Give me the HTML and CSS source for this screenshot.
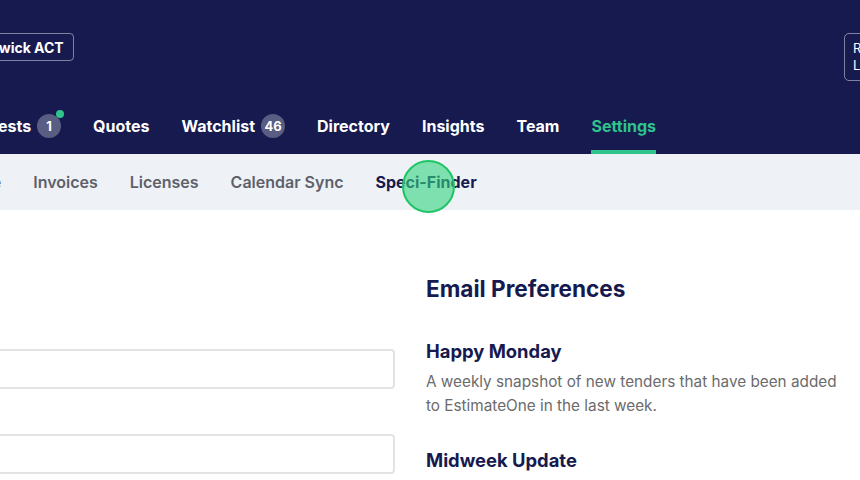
FILE: index.html
```html
<!DOCTYPE html>
<html lang="en">
<head>
  <meta charset="UTF-8">
  <meta name="viewport" content="width=device-width, initial-scale=1.0">
  <title>Settings - Speci-Finder</title>
  <link rel="stylesheet" href="styles.css">
</head>
<body>

  <header class="app-header">
    <div class="top-bar">
      <button class="location-btn">Fyshwick ACT</button>
      <div class="account-box">
        <span>Rebecca</span>
        <span>Lane</span>
      </div>
    </div>

    <nav class="main-nav">
      <a class="nav-item">Requests <span class="badge">1<span class="badge-dot"></span></span></a>
      <a class="nav-item">Quotes</a>
      <a class="nav-item">Watchlist <span class="badge">46</span></a>
      <a class="nav-item">Directory</a>
      <a class="nav-item">Insights</a>
      <a class="nav-item">Team</a>
      <a class="nav-item active">Settings</a>
    </nav>
  </header>

  <nav class="sub-nav">
    <a class="sub-item">Profile</a>
    <a class="sub-item">Invoices</a>
    <a class="sub-item">Licenses</a>
    <a class="sub-item">Calendar Sync</a>
    <a class="sub-item active">Speci-Finder</a>
    <span class="click-marker"></span>
  </nav>

  <main class="content">
    <section class="details">
      <div class="field">
        <label>First name</label>
        <input type="text">
      </div>
      <div class="field">
        <label>Last name</label>
        <input type="text">
      </div>
    </section>

    <section class="prefs">
      <h2>Email Preferences</h2>
      <div class="pref">
        <h3>Happy Monday</h3>
        <p>A weekly snapshot of new tenders that have been added to EstimateOne in the last week.</p>
      </div>
      <div class="pref">
        <h3>Midweek Update</h3>
        <p>A summary of updates to tenders you are watching.</p>
      </div>
    </section>
  </main>

</body>
</html>
```

FILE: styles.css
```css
body {
  margin: 0;
  font-family: Inter, "Noto Sans", sans-serif;
  color: #171a4f;
  background: #fff;
  overflow: hidden;
}

a {
  text-decoration: none;
  cursor: pointer;
}

.app-header {
  background-color: #171a4f;
  height: 154px;
  display: flex;
  flex-direction: column;
}

.top-bar {
  height: 98px;
  display: flex;
  justify-content: space-between;
  align-items: flex-start;
  padding-top: 33px;
  box-sizing: border-box;
}

.location-btn {
  margin-left: -44px;
  height: 28px;
  padding: 0 9px;
  background: transparent;
  color: #fff;
  font-family: inherit;
  font-size: 14px;
  font-weight: 700;
  border: 1px solid rgba(255, 255, 255, 0.45);
  border-radius: 4px;
}

.account-box {
  width: 60px;
  height: 48px;
  margin-right: -44px;
  padding: 6px 8px;
  box-sizing: border-box;
  display: flex;
  flex-direction: column;
  color: #fff;
  font-size: 13px;
  line-height: 17px;
  border: 1px solid rgba(255, 255, 255, 0.45);
  border-radius: 5px;
  overflow: hidden;
}

.main-nav {
  height: 56px;
  display: flex;
  gap: 32px;
  margin-left: -42px;
}

.nav-item {
  display: flex;
  align-items: center;
  gap: 6px;
  color: #fff;
  font-size: 16px;
  font-weight: 700;
  border-bottom: 4px solid transparent;
  padding-top: 4px;
}

.nav-item.active {
  color: #2ec48c;
  border-bottom-color: #2ec48c;
}

.badge {
  position: relative;
  min-width: 24px;
  height: 24px;
  padding: 0 3px;
  box-sizing: border-box;
  border-radius: 12px;
  background-color: #5a5d82;
  color: #fff;
  font-size: 13px;
  display: flex;
  align-items: center;
  justify-content: center;
}

.badge-dot {
  position: absolute;
  top: -4px;
  right: -3px;
  width: 8px;
  height: 8px;
  border-radius: 50%;
  background-color: #2ec48c;
}

.sub-nav {
  position: relative;
  height: 56px;
  background-color: #eef2f6;
  display: flex;
  align-items: center;
  gap: 32px;
  margin-left: -49px;
}

.sub-item {
  color: #5e6169;
  font-size: 16px;
  font-weight: 600;
}

.sub-item.active {
  color: #171a4f;
  font-weight: 700;
}

.click-marker {
  position: absolute;
  left: 451px;
  top: 6px;
  width: 53px;
  height: 53px;
  border-radius: 50%;
  background-color: rgba(52, 211, 128, 0.6);
  border: 2px solid #1fc466;
  box-sizing: border-box;
}

.content {
  display: grid;
  grid-template-columns: 495px 1fr;
  gap: 31px;
  margin-left: -100px;
}

.details {
  padding-top: 113px;
}

.field {
  display: flex;
  flex-direction: column;
  margin-bottom: 19px;
}

.field label {
  font-size: 15px;
  font-weight: 600;
  line-height: 20px;
  margin-bottom: 6px;
}

.field input {
  height: 40px;
  border: 2px solid #e3e3e3;
  border-radius: 4px;
  box-sizing: border-box;
  font-family: inherit;
}

.prefs {
  padding-top: 65px;
}

.prefs h2 {
  margin: 0 0 36px;
  font-size: 22.6px;
  line-height: 28px;
  font-weight: 700;
}

.pref h3 {
  margin: 0 0 7px;
  font-size: 18.4px;
  line-height: 24px;
  font-weight: 700;
}

.pref p {
  margin: 0 0 30px;
  max-width: 420px;
  color: #6b6b6b;
  font-size: 15.3px;
  line-height: 24px;
}
```
